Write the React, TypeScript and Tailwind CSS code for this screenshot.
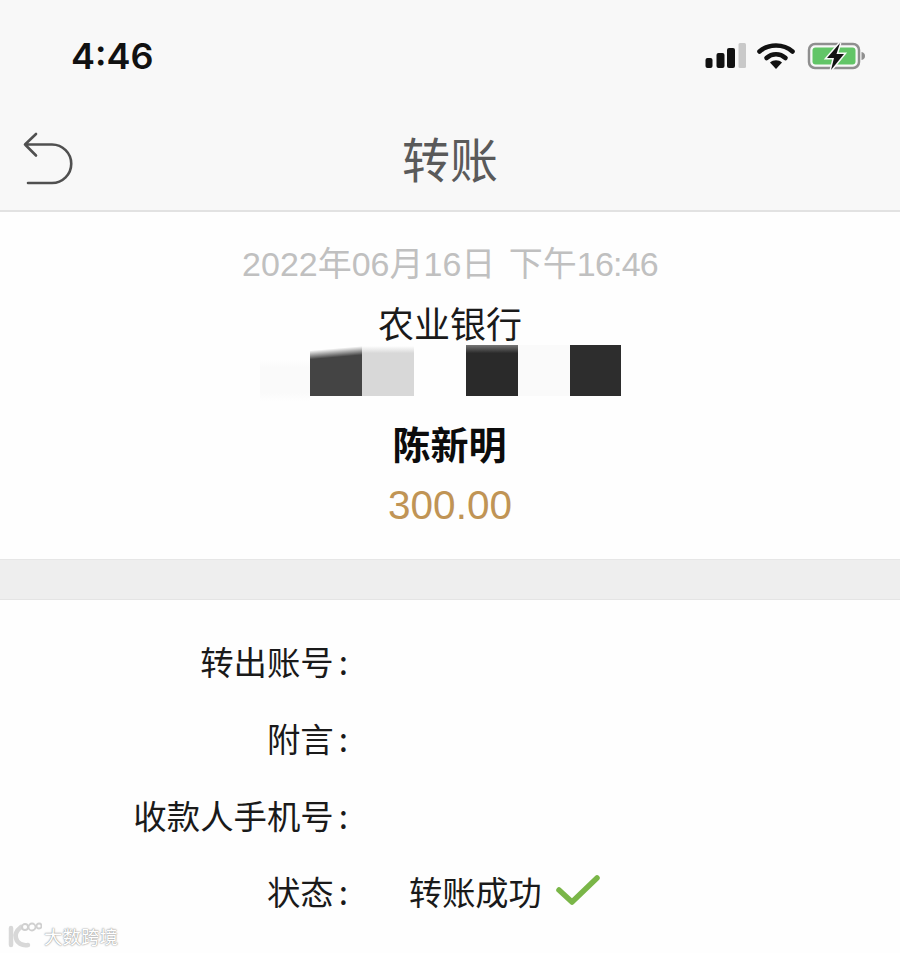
const cjk = "font-['Noto_Sans_CJK_SC',sans-serif]";

function StatusIcons() {
  return (
    <div className="flex items-center">
      {/* signal */}
      <svg width="42" height="26" viewBox="0 0 42 26" className="mr-[10px]">
        <rect x="0.500" y="15" width="7" height="10" rx="2" fill="#111" />
        <rect x="11.500" y="10" width="8" height="15" rx="2" fill="#111" />
        <rect x="22" y="5" width="8" height="20" rx="2" fill="#111" />
        <rect x="33.500" y="0" width="7.500" height="25" rx="1.500" fill="#c9c9c9" />
      </svg>
      {/* wifi */}
      <svg width="38" height="28" viewBox="0 0 38 28" className="mr-[12px]">
        <path d="M2.500 9.500C11.500 1.500 26.500 1.500 35.500 9.500" fill="none" stroke="#111" strokeWidth="4.600" strokeLinecap="round" />
        <path d="M9.500 16C15 11 23 11 28.500 16" fill="none" stroke="#111" strokeWidth="4.600" strokeLinecap="round" />
        <path d="M13 20.500C16.500 17.500 21.500 17.500 25 20.500L19 27Z" fill="#111" />
      </svg>
      {/* battery */}
      <svg width="60" height="30" viewBox="0 0 60 30">
        <rect x="2" y="3" width="50" height="24" rx="6" fill="none" stroke="#8f8f8f" strokeWidth="2.500" />
        <rect x="5.500" y="6.500" width="43" height="17" rx="3" fill="#62c567" />
        <path d="M54.500 11C57 11.500 58 13 58 15C58 17 57 18.500 54.500 19Z" fill="#8f8f8f" />
        <path d="M33 2L20 17H27L24 29L37 13H29.500Z" fill="#111" stroke="#f8f8f8" strokeWidth="3" paintOrder="stroke" />
      </svg>
    </div>
  );
}

function BackIcon() {
  return (
    <svg width="52" height="56" viewBox="0 0 52 56" className="text-[#505050]">
      <path
        d="M13 4L2 14.500L13 25.500M2 14.500H29A19 19 0 0 1 29 53H5"
        fill="none"
        stroke="currentColor"
        strokeWidth="2.600"
        strokeLinecap="round"
        strokeLinejoin="round"
      />
    </svg>
  );
}

function Row({ label, children }: { label: string; children?: React.ReactNode }) {
  return (
    <div className="flex h-[77px] items-center">
      <div className="w-[348px] shrink-0 text-right text-[33.400px] leading-none text-[#1a1a1a]">
        {label}
        <span className="ml-[5px]">:</span>
      </div>
      <div className="ml-[61px] flex items-center">{children}</div>
    </div>
  );
}

export default function App() {
  return (
    <div className={`relative flex h-[953px] w-[900px] flex-col overflow-hidden bg-[#fefefe] ${cjk}`}>
      <header className="border-b-2 border-[#e2e2e2] bg-[#f8f8f8]">
        <div className="flex h-[110px] items-center justify-between pr-[33px] pl-[71px] pt-[1px]">
          <span className="font-['Inter',sans-serif] text-[36px] leading-none font-semibold text-[#111]">4:46</span>
          <StatusIcons />
        </div>
        <div className="relative flex h-[100px] items-center justify-center">
          <div className="absolute top-[20px] left-[23px]">
            <BackIcon />
          </div>
          <h1 className="-mt-[6px] text-[48px] leading-none font-normal text-[#5a5a5a]">转账</h1>
        </div>
      </header>

      <section className="flex h-[348px] flex-col items-center border-b border-[#e6e6e6] pt-[32px]">
        <p className="font-['Liberation_Sans','Noto_Sans_CJK_SC',sans-serif] text-[34px] leading-[40px] text-[#c0c0c0]">
          2022年06月16日 <span className="ml-[4px]">下午</span>
          <span className="tracking-[-0.8px]">16:46</span>
        </p>
        <p className="mt-[18px] text-[36px] leading-[40px] text-[#1a1a1a]">农业银行</p>
        {/* masked card number */}
        <div className="mt-[3px] ml-[260px] flex h-[51px] self-start">
          <div className="h-[56px] w-[50px] bg-[linear-gradient(180deg,#fefefe_25%,#fafafa_40%,#fafafa_85%,#fefefe_100%)]" />
          <div className="h-full w-[52px] bg-[linear-gradient(175deg,#fefefe_10%,#444_26%)]" />
          <div className="h-full w-[52px] bg-[linear-gradient(180deg,#fefefe_2%,#d8d8d8_16%)]" />
          <div className="h-full w-[52px]" />
          <div className="h-full w-[52px] bg-[linear-gradient(180deg,#777_0%,#2a2a2a_16%)]" />
          <div className="h-full w-[52px] bg-[#fafafa]" />
          <div className="h-full w-[51px] bg-[#2d2d2d]" />
        </div>
        <p className="mt-[27px] -ml-[1px] text-[38px] leading-[40px] font-bold text-[#0c0c0c]">陈新明</p>
        <p className="mt-[21px] font-['Liberation_Sans',sans-serif] text-[40.500px] leading-[42px] text-[#c09455]">300.00</p>
      </section>

      <div className="h-[40px] border-b border-[#e4e4e4] bg-[#eeeeee]" />

      <section className="pt-[22px]">
        <Row label="转出账号" />
        <Row label="附言" />
        <Row label="收款人手机号" />
        <div className="-mt-[1px]">
          <Row label="状态">
            <span className="text-[33.200px] leading-none text-[#1a1a1a]">转账成功</span>
            <svg width="46" height="34" viewBox="0 0 46 34" className="ml-[13px]">
              <path d="M4 16L17 28L42 4" fill="none" stroke="#7ab648" strokeWidth="5.500" strokeLinecap="round" strokeLinejoin="round" />
            </svg>
          </Row>
        </div>
      </section>

      {/* watermark */}
      <div className="absolute top-[922px] left-[8px] flex items-center">
        <svg width="34" height="28" viewBox="0 0 34 28">
          <path d="M3 6V23M13 5C8 9 7 13 8 16C9 21 14 24 20 23" fill="none" stroke="#d8d8d8" strokeWidth="4.500" strokeLinecap="round" />
          <circle cx="17" cy="5" r="3" fill="none" stroke="#d0d0d0" strokeWidth="1.800" />
          <circle cx="24" cy="5" r="3.500" fill="none" stroke="#d0d0d0" strokeWidth="1.800" />
          <circle cx="31" cy="4" r="2.500" fill="none" stroke="#d0d0d0" strokeWidth="1.800" />
        </svg>
        <span className="ml-[2px] text-[18.500px] leading-none text-white [text-shadow:0_0_2px_#999,0_0_1px_#888]">大数跨境</span>
      </div>
    </div>
  );
}
